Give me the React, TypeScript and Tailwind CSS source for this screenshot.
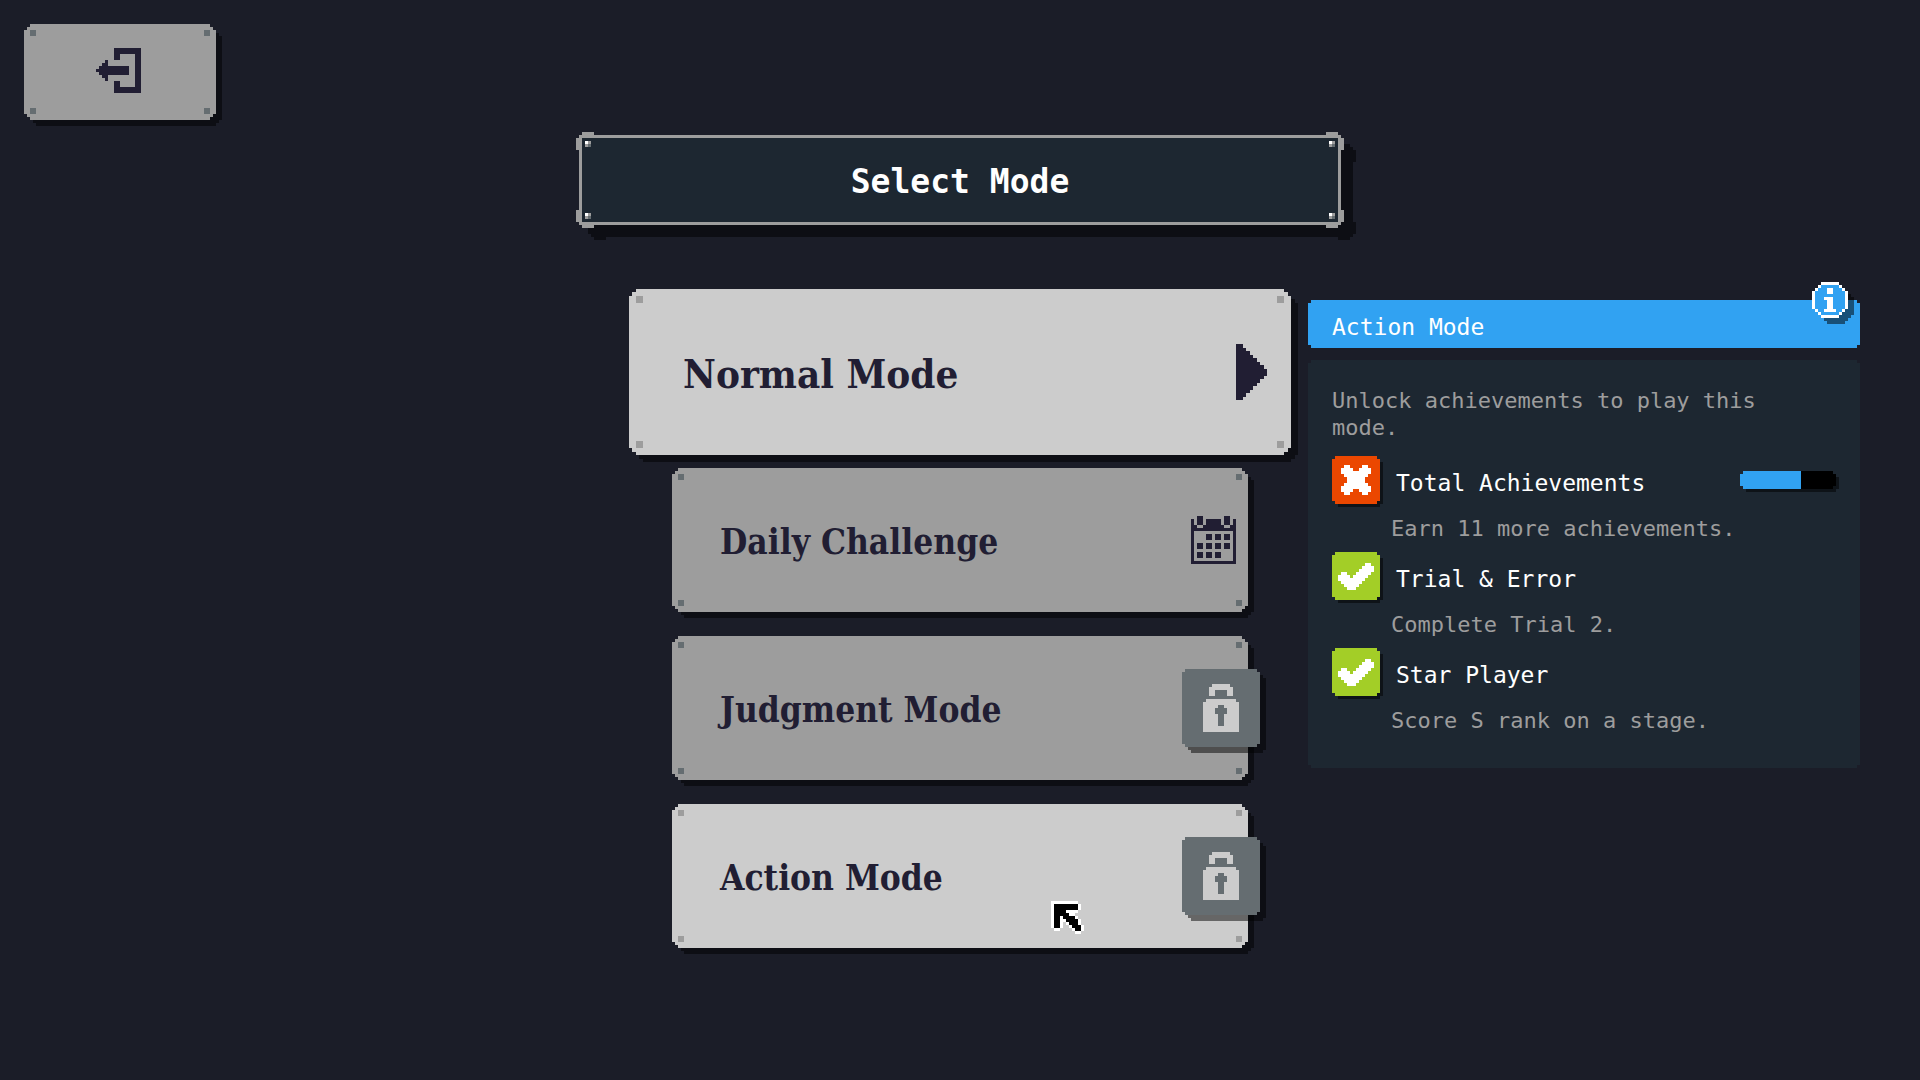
import type { ReactNode } from 'react';
import clsx from 'clsx';

// Stepped corners: one, two, or two larger steps
const NOTCH =
  '[clip-path:polygon(3px_0,calc(100%-3px)_0,calc(100%-3px)_3px,100%_3px,100%_calc(100%-3px),calc(100%-3px)_calc(100%-3px),calc(100%-3px)_100%,3px_100%,3px_calc(100%-3px),0_calc(100%-3px),0_3px,3px_3px)]';
const STEPS =
  '[clip-path:polygon(6px_0,calc(100%-6px)_0,calc(100%-6px)_3px,calc(100%-3px)_3px,calc(100%-3px)_6px,100%_6px,100%_calc(100%-6px),calc(100%-3px)_calc(100%-6px),calc(100%-3px)_calc(100%-3px),calc(100%-6px)_calc(100%-3px),calc(100%-6px)_100%,6px_100%,6px_calc(100%-3px),3px_calc(100%-3px),3px_calc(100%-6px),0_calc(100%-6px),0_6px,3px_6px,3px_3px,6px_3px)]';
const STEPS_LG =
  '[clip-path:polygon(7px_0,calc(100%-7px)_0,calc(100%-7px)_3px,calc(100%-3px)_3px,calc(100%-3px)_7px,100%_7px,100%_calc(100%-7px),calc(100%-3px)_calc(100%-7px),calc(100%-3px)_calc(100%-3px),calc(100%-7px)_calc(100%-3px),calc(100%-7px)_100%,7px_100%,7px_calc(100%-3px),3px_calc(100%-3px),3px_calc(100%-7px),0_calc(100%-7px),0_7px,3px_7px,3px_3px,7px_3px)]';
const TITLE_FRAME =
  '[clip-path:polygon(6px_0,18px_0,18px_3px,calc(100%-18px)_3px,calc(100%-18px)_0,calc(100%-6px)_0,calc(100%-6px)_3px,calc(100%-3px)_3px,calc(100%-3px)_6px,100%_6px,100%_18px,calc(100%-3px)_18px,calc(100%-3px)_calc(100%-18px),100%_calc(100%-18px),100%_calc(100%-6px),calc(100%-3px)_calc(100%-6px),calc(100%-3px)_calc(100%-3px),calc(100%-6px)_calc(100%-3px),calc(100%-6px)_100%,calc(100%-18px)_100%,calc(100%-18px)_calc(100%-3px),18px_calc(100%-3px),18px_100%,6px_100%,6px_calc(100%-3px),3px_calc(100%-3px),3px_calc(100%-6px),0_calc(100%-6px),0_calc(100%-18px),3px_calc(100%-18px),3px_18px,0_18px,0_6px,3px_6px,3px_3px,6px_3px)]';

const SLAB = 'font-["DejaVu_Serif_Condensed","DejaVu_Serif",serif] font-bold';
const MONO = 'font-["DejaVu_Sans_Mono",monospace]';

const EXIT = [
  '......#########',
  '......#########',
  '......##.....##',
  '......##.....##',
  '...#.........##',
  '..##.........##',
  '.##########..##',
  '###########..##',
  '.##########..##',
  '..##.........##',
  '...#.........##',
  '......##.....##',
  '......##.....##',
  '......#########',
  '......#########',
];

const ARROW = [
  '##.......',
  '###......',
  '####.....',
  '#####....',
  '######...',
  '#######..',
  '########.',
  '#########',
  '#########',
  '########.',
  '#######..',
  '######...',
  '#####....',
  '####.....',
  '###......',
  '##.......',
];

const CALENDAR = [
  '..##.......##..',
  '#.##.#####.##.#',
  '#.##.#####.##.#',
  '##..#######..##',
  '###############',
  '#.............#',
  '#....##.##.##.#',
  '#....##.##.##.#',
  '#.............#',
  '#.##.##.##.##.#',
  '#.##.##.##.##.#',
  '#.............#',
  '#.##.##.##....#',
  '#.##.##.##....#',
  '#.............#',
  '###############',
];

const LOCK = [
  '...######...',
  '..########..',
  '..##....##..',
  '..##....##..',
  '............',
  '.##########.',
  '############',
  '#####..#####',
  '####....####',
  '####....####',
  '#####..#####',
  '#####..#####',
  '#####..#####',
  '#####..#####',
  '############',
  '############',
];

const INFO = [
  '...######...',
  '..#oooooo#..',
  '.#ooo##ooo#.',
  '#oooo##oooo#',
  '#oooooooooo#',
  '#ooo###oooo#',
  '#oooo##oooo#',
  '#oooo##oooo#',
  '#oooo##oooo#',
  '.#oo####oo#.',
  '..#oooooo#..',
  '...######...',
];

const CROSS = [
  '.##....##.',
  '####..####',
  '##########',
  '.########.',
  '..######..',
  '..######..',
  '.########.',
  '##########',
  '####..####',
  '.##....##.',
];

const CHECK = [
  '.........##.',
  '........####',
  '.......#####',
  '.##...#####.',
  '####.#####..',
  '#########...',
  '.#######....',
  '..#####.....',
  '...###......',
];

const CURSOR = [
  'ooooooooo..',
  'o########o.',
  'o########o.',
  'o####oooo..',
  'o#####oo...',
  'o##o####o..',
  'o##oo####o.',
  'o##o.o###o.',
  'o##o..o###o',
  '.oo....o##o',
  '........oo.',
];

function PixelArt({ rows, className, ink = 'currentColor', fill = 'none' }: { rows: string[]; className: string; ink?: string; fill?: string }) {
  return (
    <svg viewBox={`0 0 ${rows[0].length} ${rows.length}`} preserveAspectRatio="none" shapeRendering="crispEdges" className={clsx('block shrink-0', className)} aria-hidden="true">
      {rows.map((row, y) =>
        [...row.matchAll(/#+|o+/g)].map((run) => (
          <rect key={`${run.index}-${y}`} x={run.index} y={y} width={run[0].length} height={1} fill={run[0][0] === '#' ? ink : fill} />
        )),
      )}
    </svg>
  );
}

function Rivets({ light, large }: { light?: boolean; large?: boolean }) {
  const dot = clsx(large ? 'size-[7px]' : 'size-[6px]', light ? 'bg-[#9d9d9d]' : 'bg-[#656d71]');
  return (
    <span className={clsx('absolute inset-0 flex flex-col justify-between', large ? 'p-[7px]' : 'p-[6px]')}>
      <span className="flex justify-between">
        <span className={dot} />
        <span className={dot} />
      </span>
      <span className="flex justify-between">
        <span className={dot} />
        <span className={dot} />
      </span>
    </span>
  );
}

type PlateProps = {
  className: string;
  light?: boolean;
  large?: boolean;
  label?: string;
  children: ReactNode;
};

function PlateButton({ className, light, large, label, children }: PlateProps) {
  const clip = large ? STEPS_LG : STEPS;
  return (
    <button type="button" aria-label={label} className={clsx('relative cursor-pointer text-[#211e33]', className)}>
      <span className={clsx('absolute inset-0 bg-black/50', large ? 'translate-[7px]' : 'translate-[6px]', clip)} />
      <span className={clsx('absolute inset-0', light ? 'bg-[#cccccc]' : 'bg-[#9d9d9d]', clip)}>
        <Rivets light={light} large={large} />
      </span>
      <span className="relative flex h-full items-center">{children}</span>
    </button>
  );
}

function TitleRivet() {
  return (
    <span className="grid grid-cols-2">
      <span className="size-[3px] bg-white" />
      <span className="size-[3px] bg-[#9d9d9d]" />
      <span className="size-[3px] bg-[#9d9d9d]" />
      <span className="size-[3px] bg-[#656d71]" />
    </span>
  );
}

function Title() {
  return (
    <div className="relative mx-auto mt-3 h-24 w-full max-w-3xl">
      <div className={clsx('absolute inset-0 translate-3 bg-black/50', TITLE_FRAME)} />
      <div className={clsx('absolute inset-0 bg-[#9d9d9d] p-[6px]', TITLE_FRAME)}>
        <div className="flex h-full flex-col justify-between bg-[#1d2731] p-[3px]">
          <div className="flex justify-between">
            <TitleRivet />
            <TitleRivet />
          </div>
          <div className="flex justify-between">
            <TitleRivet />
            <TitleRivet />
          </div>
        </div>
      </div>
      <h1 className={clsx('relative flex h-full items-center justify-center pt-1 text-[33px] font-bold text-white', MONO)}>Select Mode</h1>
    </div>
  );
}

function LockBadge() {
  return (
    <span className="absolute top-1/2 -right-3 size-[78px] -translate-y-1/2">
      <span className={clsx('absolute inset-0 translate-[6px] bg-black/50', NOTCH)} />
      <span className={clsx('absolute inset-0 flex items-center justify-center bg-[#656d71]', NOTCH)}>
        <PixelArt rows={LOCK} className="h-12 w-9 text-[#cccccc]" />
      </span>
    </span>
  );
}

const requirements = [
  { name: 'Total Achievements', hint: 'Earn 11 more achievements.', done: false, progress: 64 },
  { name: 'Trial & Error', hint: 'Complete Trial 2.', done: true },
  { name: 'Star Player', hint: 'Score S rank on a stage.', done: true },
];

function Requirement({ name, hint, done, progress }: { name: string; hint: string; done: boolean; progress?: number }) {
  return (
    <li>
      <div className="flex h-12 items-center">
        <span className="relative size-12 shrink-0">
          <span className={clsx('absolute inset-0 translate-[3px] bg-black/50', NOTCH)} />
          <span className={clsx('absolute inset-0 flex items-center justify-center text-white', NOTCH, done ? 'bg-[#a3ce27]' : 'bg-[#eb4700]')}>
            {done ? <PixelArt rows={CHECK} className="h-[27px] w-9" /> : <PixelArt rows={CROSS} className="size-[30px]" />}
          </span>
        </span>
        <span className="ml-4 flex-1 pt-[6px] text-[23px] text-white">{name}</span>
        {progress !== undefined && (
          <span role="progressbar" aria-label={name} aria-valuenow={progress} className="relative h-[18px] w-24">
            <span className={clsx('absolute inset-0 translate-[3px] bg-black/50', NOTCH)} />
            <span className={clsx('absolute inset-0 bg-black', NOTCH)}>
              <span className="block h-full bg-[#31a2f2]" style={{ width: `${progress}%` }} />
            </span>
          </span>
        )}
      </div>
      <p className="mt-[11px] pl-[59px] text-[22px] leading-[27px] text-[#9d9d9d]">{hint}</p>
    </li>
  );
}

function InfoPanel() {
  return (
    <aside className={clsx('flex flex-col gap-3 px-15 pt-[11px]', MONO)}>
      <div className="relative">
        <h2 className={clsx('flex h-12 items-center bg-[#31a2f2] px-6 pt-[6px] text-[23px] text-white', NOTCH)}>Action Mode</h2>
        <PixelArt rows={INFO} className="absolute -top-3 right-[6px] size-9 opacity-50" ink="#000" fill="#000" />
        <PixelArt rows={INFO} className="absolute -top-[18px] right-3 size-9" ink="#fff" fill="#31a2f2" />
      </div>
      <div className={clsx('bg-[#1d2731] px-6 pt-[27px] pb-[34px]', NOTCH)}>
        <p className="max-w-[480px] text-[22px] leading-[27px] text-[#9d9d9d]">Unlock achievements to play this mode.</p>
        <ul className="mt-[15px] flex flex-col gap-[10px]">
          {requirements.map((item) => (
            <Requirement key={item.name} {...item} />
          ))}
        </ul>
      </div>
    </aside>
  );
}

const App = () => {
  return (
    <div className="min-h-screen bg-[#1b1d28]">
      <header className="px-6 pt-6">
        <PlateButton className="block h-24 w-48" label="Exit">
          <PixelArt rows={EXIT} className="mx-auto size-12 pr-[3px] pb-[3px]" />
        </PlateButton>
        <Title />
      </header>

      <main className="mt-[61px] grid grid-cols-[1fr_576px_1fr] items-start">
        <nav className={clsx('col-start-2 flex flex-col items-center gap-6', SLAB)}>
          <PlateButton className="-mb-[11px] h-[166px] w-[662px]" light large>
            <span className="flex-1 pt-1 pl-[54px] text-left text-[40px]">Normal Mode</span>
            <PixelArt rows={ARROW} className="mr-6 h-14 w-[31px]" />
          </PlateButton>
          <PlateButton className="h-36 w-full">
            <span className="flex-1 pt-1 pl-12 text-left text-[35px]">Daily Challenge</span>
            <PixelArt rows={CALENDAR} className="mr-3 h-12 w-[45px]" />
          </PlateButton>
          <PlateButton className="h-36 w-full">
            <span className="flex-1 pt-1 pl-12 text-left text-[35px]">Judgment Mode</span>
            <LockBadge />
          </PlateButton>
          <PlateButton className="h-36 w-full" light>
            <span className="flex-1 pt-1 pl-12 text-left text-[35px]">Action Mode</span>
            <LockBadge />
            {/* pointer */}
            <PixelArt rows={CURSOR} className="absolute top-[97px] left-[379px] size-[33px]" ink="#000" fill="#fff" />
          </PlateButton>
        </nav>
        <InfoPanel />
      </main>
    </div>
  );
};

export default App;
